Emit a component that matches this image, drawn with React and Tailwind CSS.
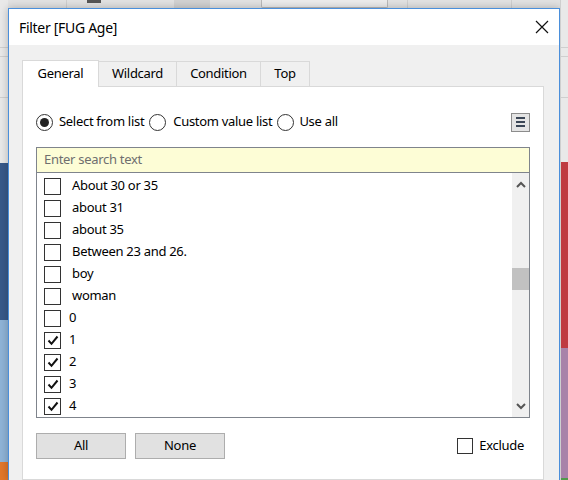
import React from "react";

const items = [
  { label: "About 30 or 35", checked: false, text: true },
  { label: "about 31", checked: false, text: true },
  { label: "about 35", checked: false, text: true },
  { label: "Between 23 and 26.", checked: false, text: true },
  { label: "boy", checked: false, text: true },
  { label: "woman", checked: false, text: true },
  { label: "0", checked: false, text: false },
  { label: "1", checked: true, text: false },
  { label: "2", checked: true, text: false },
  { label: "3", checked: true, text: false },
  { label: "4", checked: true, text: false },
];

const Check = ({ checked }) => (
  <div className="w-[17px] h-[17px] border border-[#333333] bg-white flex items-center justify-center shrink-0">
    {checked && (
      <svg width="12" height="11" viewBox="0 0 12 11">
        <path d="M1.5 5.5 L4.5 8.8 L10.5 1.5" fill="none" stroke="#111" strokeWidth="2" />
      </svg>
    )}
  </div>
);

const Radio = ({ on }) => (
  <div className="w-[17px] h-[17px] rounded-full border border-[#333333] bg-white flex items-center justify-center shrink-0">
    {on && <div className="w-[9px] h-[9px] rounded-full bg-[#222]" />}
  </div>
);

const Tab = ({ label, active, w }) => (
  <div
    className={`${w} flex items-center justify-center border-t border-x ${
      active
        ? "h-[27px] bg-white border-[#d9d9d9] -mb-px relative z-10"
        : "h-[25px] bg-[#f0f0f0] border-[#d9d9d9] -ml-px"
    }`}
  >
    <span className="text-[13px] text-black">{label}</span>
  </div>
);

export default function App() {
  return (
    <div
      className="w-[568px] h-[480px] overflow-hidden flex bg-[#e4e4e4] tracking-[-0.3px]"
      style={{ fontFamily: '"Noto Sans", "Liberation Sans", sans-serif' }}
    >
      {/* left background strip */}
      <div className="w-[8px] flex flex-col shrink-0">
        <div className="h-[163px] bg-[#e9e9e9] flex flex-col">
          <div className="h-[48px] border-b border-[#cfcfcf]" />
          <div className="h-[9px] border-b border-[#cfcfcf]" />
          <div className="h-[41px] border-b border-[#cfcfcf]" />
        </div>
        <div className="h-[157px] bg-[#37598a]" />
        <div className="h-[142px] bg-[#8fb4d7]" />
        <div className="flex-1 bg-[#e2772a]" />
      </div>

      {/* middle column: top strip + dialog */}
      <div className="w-[552px] flex flex-col shrink-0">
        <div className="h-[8px] bg-[#e2e2e2] flex">
          <div className="w-[59px] border-r border-[#cfcfcf]" />
          <div className="w-[20px]" />
          <div className="w-[14px] h-[3px] bg-[#555]" />
          <div className="w-[73px]" />
          <div className="w-[36px] bg-[#d2d2d2]" />
          <div className="w-[51px]" />
          <div className="w-[127px] border-x border-b border-[#b9b9b9] rounded-b-[2px] bg-[#ececec]" />
          <div className="w-[19px]" />
          <div className="w-[105px] border-x border-[#cfcfcf]" />
        </div>

        <div className="flex-1 flex flex-col border-t border-x border-[#4a8fdb] bg-[#f0f0f0] shadow-[0_0_8px_rgba(0,0,0,0.25)]">
          {/* title bar */}
          <div className="h-[36px] bg-white flex items-center justify-between pl-[10px] pr-[10px]">
            <span className="text-[14px] text-black">Filter [FUG Age]</span>
            <svg width="14" height="14" viewBox="0 0 14 14">
              <path d="M1 1 L13 13 M13 1 L1 13" stroke="#111" strokeWidth="1.2" />
            </svg>
          </div>

          {/* body */}
          <div className="flex-1 flex flex-col pt-[14px] pl-[13px] pr-[15px] bg-[#f0f0f0]">
            <div className="flex items-end h-[27px]">
              <Tab label="General" active w="w-[77px]" />
              <Tab label="Wildcard" w="w-[79px]" />
              <Tab label="Condition" w="w-[85px]" />
              <Tab label="Top" w="w-[50px]" />
            </div>

            <div className="flex-1 bg-white border border-[#d9d9d9] px-[13px] pt-[26px] flex flex-col">
              {/* radio row */}
              <div className="flex items-center h-[18px] text-[13px] text-black">
                <Radio on />
                <span className="ml-[6px]">Select from list</span>
                <div className="ml-[5px]"><Radio /></div>
                <span className="ml-[7px]">Custom value list</span>
                <div className="ml-[5px]"><Radio /></div>
                <span className="ml-[5px]">Use all</span>
                <div className="ml-auto w-[19px] h-[19px] border border-[#8c8c8c] bg-[#e4e4e4] flex flex-col items-center justify-center gap-[2px]">
                  <div className="w-[9px] h-[2px] bg-[#3b4656]" />
                  <div className="w-[9px] h-[2px] bg-[#3b4656]" />
                  <div className="w-[9px] h-[2px] bg-[#3b4656]" />
                </div>
              </div>

              {/* list box */}
              <div className="mt-[16px] border border-[#7f848c] flex flex-col">
                <div className="h-[25px] bg-[#fdfdd6] border-b border-[#7f848c] flex items-center pl-[7px]">
                  <span className="text-[13px] text-[#6f6f6f]">Enter search text</span>
                </div>
                <div className="h-[244px] flex">
                  <div className="flex-1 flex flex-col pl-[7px] pt-[2px]">
                    {items.map((it) => (
                      <div key={it.label} className="h-[22px] flex items-center">
                        <Check checked={it.checked} />
                        <span className={`${it.text ? "ml-[11px]" : "ml-[8px]"} text-[13px] text-black`}>
                          {it.label}
                        </span>
                      </div>
                    ))}
                  </div>
                  <div className="w-[17px] bg-[#f0f0f0] flex flex-col items-center">
                    <div className="h-[22px] flex items-center justify-center">
                      <svg width="10" height="7" viewBox="0 0 10 7">
                        <path d="M1 6 L5 2 L9 6" fill="none" stroke="#555" strokeWidth="2" />
                      </svg>
                    </div>
                    <div className="h-[73px]" />
                    <div className="w-[17px] h-[22px] bg-[#c1c1c1]" />
                    <div className="flex-1" />
                    <div className="h-[22px] flex items-center justify-center">
                      <svg width="10" height="7" viewBox="0 0 10 7">
                        <path d="M1 1 L5 5 L9 1" fill="none" stroke="#555" strokeWidth="2" />
                      </svg>
                    </div>
                  </div>
                </div>
              </div>

              {/* bottom buttons */}
              <div className="mt-[15px] flex items-center">
                <div className="w-[90px] h-[26px] bg-[#e1e1e1] border border-[#adadad] flex items-center justify-center text-[13px] text-black">
                  All
                </div>
                <div className="ml-[9px] w-[90px] h-[26px] bg-[#e1e1e1] border border-[#adadad] flex items-center justify-center text-[13px] text-black">
                  None
                </div>
                <div className="ml-auto mr-[6px] flex items-center">
                  <div className="w-[16px] h-[16px] border border-[#333333] bg-white" />
                  <span className="ml-[6px] text-[13px] text-black">Exclude</span>
                </div>
              </div>
            </div>
          </div>
        </div>
      </div>

      {/* right background strip */}
      <div className="flex-1 flex flex-col border-l border-[#cfcfcf]">
        <div className="h-[162px] bg-[#e9e9e9] flex flex-col">
          <div className="h-[48px] border-b border-[#cfcfcf]" />
          <div className="h-[9px] border-b border-[#cfcfcf]" />
          <div className="h-[41px] border-b border-[#cfcfcf]" />
        </div>
        <div className="h-[186px] bg-[#bf3a41]" />
        <div className="h-[130px] bg-[#a982a9]" />
        <div className="flex-1 bg-[#4f9a4a]" />
      </div>
    </div>
  );
}
